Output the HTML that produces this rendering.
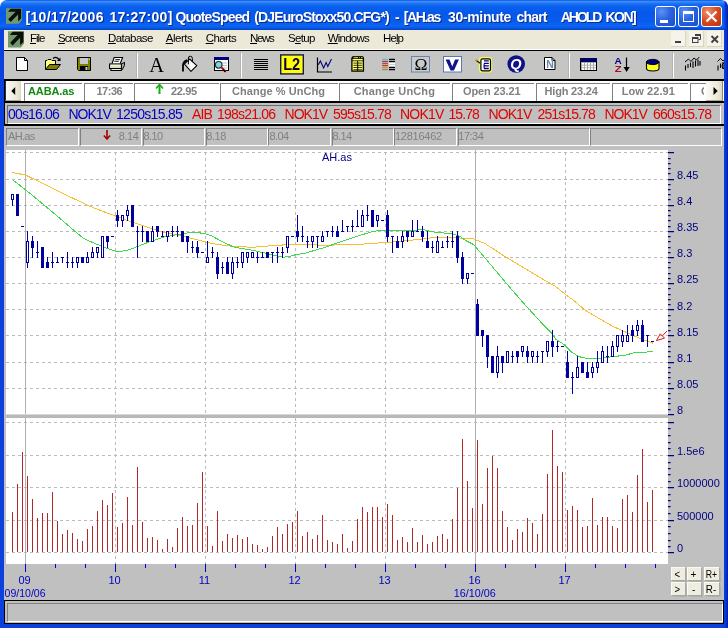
<!DOCTYPE html>
<html><head><meta charset="utf-8"><title>QuoteSpeed</title>
<style>
*{margin:0;padding:0;box-sizing:border-box}
html,body{width:728px;height:628px;overflow:hidden;background:#0c3fdc;font-family:"Liberation Sans",sans-serif}
.a{position:absolute}
.x{position:absolute;white-space:pre}
#win{will-change:transform;position:absolute;left:0;top:0;width:728px;height:628px;background:#0c41de;overflow:hidden}
#title{position:absolute;left:0;top:0;width:728px;height:30px;background:linear-gradient(#0a52e0 0,#3a8cfc 1.5px,#1f74f4 3.5px,#0a62ee 6px,#0658ea 13px,#075cee 22px,#0c66f6 26px,#0858e0 28px,#0440c4 30px);border-radius:7px 7px 0 0}
#title .x{text-shadow:1px 1px 0 #0a2a8a}
#menu{position:absolute;left:4px;top:30px;width:720px;height:20px;background:#ece9d8;border-bottom:1px solid #fff}
#tb{position:absolute;left:4px;top:50px;width:720px;height:29px;background:#c5c5c4;border-top:1px solid #000}
#r1{position:absolute;left:4px;top:79px;width:720px;height:24px;background:#fff;border-top:2px solid #000;border-bottom:2px solid #000}
.c1{position:absolute;top:83px;height:18px;border-top:1px solid #808080;border-left:1px solid #808080;background:#fff}
#r2{position:absolute;left:4px;top:103px;width:720px;height:21px;background:#c0c0c0}
#r3{position:absolute;left:4px;top:126px;width:720px;height:23px;background:#c0c0c0}
.c3{position:absolute;top:128px;height:18px;border-top:1px solid #808080;border-left:1px solid #808080;border-right:1px solid #fff;border-bottom:1px solid #fff}
#chart{position:absolute;left:4px;top:149px;width:720px;height:451px;background:#c0c0c0}
#status{position:absolute;left:4px;top:600px;width:720px;height:24px;background:#c0c0c0;border:1px solid #000}
.wb{position:absolute;top:6px;width:21px;height:21px;border:1px solid #fff;border-radius:3px;background:radial-gradient(circle at 30% 25%,#5a92f8 0,#2a62e0 45%,#1c4cc8 100%)}
.wc{background:radial-gradient(circle at 30% 25%,#f09070 0,#d84820 50%,#b83010 100%)}
.mb{position:absolute;top:31px;width:15px;height:16px;background:#f6f4ea;border-right:1px solid #d8d4c4;border-bottom:1px solid #d8d4c4}
.sb{position:absolute;width:14px;height:13px;background:#efede0;border-top:1px solid #fbfaf4;border-left:1px solid #fbfaf4;box-shadow:1px 1px 0 #a8a8a0,1.5px 1.5px 1px #b0b0b0}
</style></head><body>
<div id="win">
<div class="a" style="left:0;top:0;width:728px;height:8px;background:#fff"></div>
<div id="title"><span class="x " style="left:25.40px;top:8.15px;font-size:14px;line-height:18px;font-weight:bold;color:#fff;letter-spacing:0.336px;">[10/17/2006 </span><span class="x " style="left:109.40px;top:8.15px;font-size:14px;line-height:18px;font-weight:bold;color:#fff;letter-spacing:0.282px;">17:27:00] </span><span class="x " style="left:175.40px;top:8.15px;font-size:14px;line-height:18px;font-weight:bold;color:#fff;letter-spacing:-0.856px;">QuoteSpeed </span><span class="x " style="left:254.20px;top:8.15px;font-size:14px;line-height:18px;font-weight:bold;color:#fff;letter-spacing:-0.854px;">(DJEuroStoxx50.CFG*) </span><span class="x " style="left:394.90px;top:8.15px;font-size:14px;line-height:18px;font-weight:bold;color:#fff;letter-spacing:0.000px;">- </span><span class="x " style="left:403.70px;top:8.15px;font-size:14px;line-height:18px;font-weight:bold;color:#fff;letter-spacing:-1.352px;">[AH.as </span><span class="x " style="left:448.10px;top:8.15px;font-size:14px;line-height:18px;font-weight:bold;color:#fff;letter-spacing:-0.355px;">30-minute </span><span class="x " style="left:516.40px;top:8.15px;font-size:14px;line-height:18px;font-weight:bold;color:#fff;letter-spacing:-0.793px;">chart </span><span class="x " style="left:560.80px;top:8.15px;font-size:14px;line-height:18px;font-weight:bold;color:#fff;letter-spacing:-2.066px;">AHOLD </span><span class="x " style="left:605.40px;top:8.15px;font-size:14px;line-height:18px;font-weight:bold;color:#fff;letter-spacing:-1.503px;">KON] </span>
<div class="wb" style="left:655px"><div class="a" style="left:4px;top:13px;width:8px;height:3px;background:#fff"></div></div>
<div class="wb" style="left:678px"><div class="a" style="left:4px;top:4px;width:11px;height:11px;border:1px solid #fff;border-top-width:3px"></div></div>
<div class="wb wc" style="left:701px"><svg class="a" style="left:0;top:0" width="19" height="19"><path d="M4.5,4.5L14.5,14.5M14.5,4.5L4.5,14.5" stroke="#fff" stroke-width="2.3"/></svg></div>
<svg class="a" style="left:6px;top:8.2px" width="17" height="17" viewBox="0 0 17 17"><path d="M0,0.2H16V12L13,15.8H0Z" fill="#73986f"/><path d="M2.2,3.5L4.7,0.8H15.2V10.5L12.1,13.6V6.6L4.6,14L2.2,11.2L9.6,3.7H2.2Z" fill="#0a0f0a"/></svg>
</div>
<div class="a" style="left:722px;top:0;width:6px;height:628px;border-radius:0 7px 0 0/0 9px 0 0;background:linear-gradient(90deg,rgba(10,58,216,0) 0,rgba(10,58,216,0) 33%,#0a3ad8 50%,#0830c8 75%,#041c98)"></div>
<div id="menu"></div>
<svg class="a" style="left:8px;top:31.3px" width="17" height="18" viewBox="0 0 17 18"><path d="M0,0.2H16V12.5L13,16.6H0Z" fill="#73986f"/><path d="M2.2,3.6L4.7,0.8H15.4V11L12.1,14.2V6.8L4.6,14.6L2.2,11.8L9.6,3.9H2.2Z" fill="#0a0f0a"/></svg>
<div class="mb" style="left:671px"><div class="a" style="left:4px;top:10px;width:6px;height:2px;background:#404040"></div></div>
<div class="mb" style="left:689px"><svg class="a" style="left:0;top:0" width="15" height="16"><path d="M6,3.5H11.5V8.5H9.5" fill="none" stroke="#404040" stroke-width="1"/><path d="M6,4H11.5" stroke="#404040" stroke-width="2"/><rect x="3.5" y="6.5" width="5.5" height="5" fill="none" stroke="#404040"/><path d="M3.5,7H9" stroke="#404040" stroke-width="2"/></svg></div>
<div class="mb" style="left:707px"><svg class="a" style="left:0;top:0" width="15" height="16"><path d="M4.5,5L11,11.5M11,5L4.5,11.5" stroke="#404040" stroke-width="1.9"/></svg></div>
<span class="x " style="left:30.00px;top:31.27px;font-size:11.5px;line-height:15.5px;font-weight:normal;color:#000;letter-spacing:-1.045px;"><u>F</u>ile </span><span class="x " style="left:58.00px;top:31.27px;font-size:11.5px;line-height:15.5px;font-weight:normal;color:#000;letter-spacing:-0.906px;"><u>S</u>creens </span><span class="x " style="left:108.00px;top:31.27px;font-size:11.5px;line-height:15.5px;font-weight:normal;color:#000;letter-spacing:-0.548px;"><u>D</u>atabase </span><span class="x " style="left:165.70px;top:31.27px;font-size:11.5px;line-height:15.5px;font-weight:normal;color:#000;letter-spacing:-0.469px;"><u>A</u>lerts </span><span class="x " style="left:205.70px;top:31.27px;font-size:11.5px;line-height:15.5px;font-weight:normal;color:#000;letter-spacing:-0.564px;"><u>C</u>harts </span><span class="x " style="left:250.00px;top:31.27px;font-size:11.5px;line-height:15.5px;font-weight:normal;color:#000;letter-spacing:-1.335px;"><u>N</u>ews </span><span class="x " style="left:288.00px;top:31.27px;font-size:11.5px;line-height:15.5px;font-weight:normal;color:#000;letter-spacing:-0.664px;">S<u>e</u>tup </span><span class="x " style="left:327.70px;top:31.27px;font-size:11.5px;line-height:15.5px;font-weight:normal;color:#000;letter-spacing:-0.767px;"><u>W</u>indows </span><span class="x " style="left:383.00px;top:31.27px;font-size:11.5px;line-height:15.5px;font-weight:normal;color:#000;letter-spacing:-0.919px;">He<u>l</u>p </span>
<div id="tb"></div><svg class="a" style="left:0;top:51px" width="724" height="28" viewBox="0 51 724 28" font-family="'Liberation Sans',sans-serif">
<path d="M136.5,52V78" stroke="#b4b4b4" stroke-width="1"/><path d="M137.5,53V78" stroke="#fff" stroke-width="1"/>
<path d="M240.5,52V78" stroke="#b4b4b4" stroke-width="1"/><path d="M241.5,53V78" stroke="#fff" stroke-width="1"/>
<path d="M568.5,52V78" stroke="#b4b4b4" stroke-width="1"/><path d="M569.5,53V78" stroke="#fff" stroke-width="1"/>
<path d="M672.5,52V78" stroke="#b4b4b4" stroke-width="1"/><path d="M673.5,53V78" stroke="#fff" stroke-width="1"/>
<path d="M16.5,57.5H24.5L27.5,60.5V70.5H16.5Z" fill="#fff" stroke="#000"/><path d="M24.5,57.5V60.5H27.5" fill="none" stroke="#000"/>
<path d="M45.5,69.5V60.5H47L48,59.5H51L52,60.5H55.5V64.5" fill="#ffff80" stroke="#000"/><path d="M46,69V61H55V65H49Z" fill="#ffff80"/>
<path d="M45.5,69.5L49.5,64.5H60.5L56.5,69.5Z" fill="#808000" stroke="#000" stroke-linejoin="round"/>
<path d="M53,58.5Q56,56 59,59.5" fill="none" stroke="#000" stroke-width="1.2"/><path d="M57,61H60.5V57.5Z" fill="#000"/>
<path d="M77.5,57.5H90.5V70.5H78.5L77.5,69.5Z" fill="#808000" stroke="#000"/><rect x="80" y="58" width="8" height="6" fill="#c8c8c8"/><rect x="80" y="66" width="8" height="4.5" fill="#000"/><rect x="85.5" y="67" width="2" height="3" fill="#c8c8c8"/><rect x="88.7" y="58.5" width="1.2" height="1.2" fill="#fff"/>
<path d="M121.3,64L124.5,62.3V65.3L122,70L121,70.5Z" fill="#a8a8a8" stroke="#000" stroke-width="1" stroke-linejoin="round"/>
<path d="M112,63.5L114.2,57.5H122.6L120.2,63.5" fill="#fff" stroke="#000" stroke-width="1.1"/><path d="M115.3,59.6H120M114.3,61.3H118.8" stroke="#202020" stroke-width="1"/>
<rect x="109.6" y="64" width="11.8" height="4.5" fill="#e0e0e0" stroke="#000" stroke-width="1.1"/><path d="M110.4,66.8H120.6" stroke="#e8e8a0" stroke-width="1.8"/><path d="M110.4,65.2H120.6" stroke="#f4f4f4" stroke-width="1"/>
<path d="M111,68.6V70.5H121.2" fill="none" stroke="#000" stroke-width="1.2"/><path d="M111.8,69.5H120.6" stroke="#e8e8e8" stroke-width="1"/>
<text x="149.3" y="71.6" font-family="'Liberation Serif',serif" font-size="20.5" fill="#000">A</text>
<defs><linearGradient id="bk" x1="0" y1="0" x2="1" y2="0"><stop offset="0" stop-color="#c8c8c8"/><stop offset="0.55" stop-color="#fff"/><stop offset="1" stop-color="#fff"/></linearGradient></defs>
<path d="M184.3,64L189.6,59L196.8,65.6L191,71.4Z" fill="url(#bk)" stroke="#000" stroke-width="1.1" stroke-linejoin="round"/><path d="M188.4,64.3V58Q188.4,56.2 190.3,56.2Q192.4,56.3 192.4,58.5V61" fill="none" stroke="#000" stroke-width="1"/><path d="M187,60.2Q183,61.8 183,65.5V71.6" fill="none" stroke="#000" stroke-width="1.8"/>
<rect x="214.5" y="57.5" width="14" height="13" fill="#fff" stroke="#000"/><rect x="214" y="57" width="15" height="3" fill="#000080"/><path d="M222,63H227M222,65.5H227M223,68H227" stroke="#b0b0c8" stroke-width="0.9"/><circle cx="218.7" cy="64.8" r="3.3" fill="#80d8d8" stroke="#203040" stroke-width="1.2"/><path d="M221.5,67.5L225.5,71.5" stroke="#c00000" stroke-width="1.8"/><path d="M223,69.8L225.6,72" stroke="#000" stroke-width="1.2"/>
<path d="M254,59.5H268M254,61.5H268M254,63.5H268M254,65.5H268M254,67.5H268M254,69.5H268" stroke="#000" stroke-width="1" shape-rendering="crispEdges"/>
<rect x="280.7" y="54.9" width="22.6" height="19" fill="#ffff00" stroke="#181850" stroke-width="1.4"/><text x="283.2" y="69.8" font-size="16" font-weight="bold" fill="#100048" textLength="17" lengthAdjust="spacingAndGlyphs">L2</text>
<path d="M317.5,57.5V72H332" fill="none" stroke="#000" stroke-width="1.2"/><path d="M318.3,64.8L320.4,61L323.6,68L326.1,62.6L327.8,66.4L331.5,59" fill="none" stroke="#000080" stroke-width="1.1"/>
<path d="M351.9,58L353.2,57H362.3L363.4,58V71.2H351.9Z" fill="#ffff60" stroke="#000" stroke-width="1.3" stroke-linejoin="round"/><rect x="352" y="56.6" width="11.4" height="2.3" fill="#000"/><path d="M353.6,57.7H358M359.2,57.7H360M361,57.7H362.6" stroke="#ffff60" stroke-width="0.9"/>
<path d="M352,60.75H363.4M353.4,63.1H362.2M353.4,65.3H362.2M353.4,67.5H362.2M353.4,69.7H362.2" stroke="#000" stroke-width="0.75"/><path d="M357.7,60.75V71" stroke="#000" stroke-width="1"/>
<path d="M382.2,59.40H387.9" stroke="#70b0e0" stroke-width="1.25"/><path d="M389,59.40H395" stroke="#000" stroke-width="1.25"/>
<path d="M382.2,61.44H387.9" stroke="#585868" stroke-width="1.25"/><path d="M389,61.44H395" stroke="#000" stroke-width="1.25"/>
<path d="M382.2,63.48H387.9" stroke="#e03030" stroke-width="1.25"/><path d="M389,63.48H395" stroke="#fff" stroke-width="1.25"/>
<path d="M382.2,65.52H387.9" stroke="#b04010" stroke-width="1.25"/><path d="M389,65.52H395" stroke="#fff" stroke-width="1.25"/>
<path d="M382.2,67.56H387.9" stroke="#e08030" stroke-width="1.25"/><path d="M389,67.56H395" stroke="#000" stroke-width="1.25"/>
<path d="M382.2,69.60H387.9" stroke="#909050" stroke-width="1.25"/><path d="M389,69.60H395" stroke="#000" stroke-width="1.25"/>
<rect x="411.5" y="56.5" width="18" height="15.5" fill="#cacaca" stroke="#6484b8" stroke-width="1"/><text x="414.6" y="69.7" font-family="'Liberation Serif',serif" font-size="16.5" fill="#000" textLength="13" lengthAdjust="spacingAndGlyphs">Ω</text>
<rect x="443.5" y="56.5" width="18" height="15.5" fill="#fff" stroke="#5878b8" stroke-width="1"/><text x="446.3" y="69.9" font-size="15.2" font-weight="bold" fill="#10108a" stroke="#10108a" stroke-width="0.9" textLength="12" lengthAdjust="spacingAndGlyphs">V</text>
<rect x="480" y="58" width="11.2" height="13.7" rx="2.2" fill="none" stroke="#ffff40" stroke-width="1.8"/><rect x="480.9" y="58.9" width="9.6" height="12" rx="1.6" fill="#fff" stroke="#000" stroke-width="1.2"/><path d="M484,60.8H488.8M484,63.4H488.8M484,65.9H488.8M484,68.5H488.8" stroke="#000070" stroke-width="1.3"/><path d="M484.1,63.4V68.5" stroke="#000070" stroke-width="1.1"/><path d="M475.9,60.2L480.2,63.2" stroke="#201000" stroke-width="1.3"/><path d="M475.7,59.9L477.3,61" stroke="#e08000" stroke-width="1.3"/>
<circle cx="516.2" cy="64" r="8.8" fill="#10108a"/><text x="510.3" y="69.3" font-size="14.5" font-weight="bold" font-style="italic" fill="#fff">Q</text>
<path d="M544.5,57.5H552L555,60.5V69.5H544.5Z" fill="#fff" stroke="#000"/><path d="M552,57.5V60.5H555" fill="none" stroke="#000"/><text x="546.3" y="67.8" font-size="10.5" font-weight="bold" fill="#6888b0">N</text>
<rect x="580.5" y="58.5" width="16" height="12" fill="#a8a8a8" stroke="#000"/><rect x="580" y="58" width="17" height="4" fill="#000060"/>
<rect x="582" y="63.0" width="2" height="1.7" fill="#fff"/>
<rect x="585" y="63.0" width="2" height="1.7" fill="#fff"/>
<rect x="588" y="63.0" width="2" height="1.7" fill="#fff"/>
<rect x="591" y="63.0" width="2" height="1.7" fill="#fff"/>
<rect x="594" y="63.0" width="2" height="1.7" fill="#fff"/>
<rect x="582" y="65.6" width="2" height="1.7" fill="#fff"/>
<rect x="585" y="65.6" width="2" height="1.7" fill="#fff"/>
<rect x="588" y="65.6" width="2" height="1.7" fill="#fff"/>
<rect x="591" y="65.6" width="2" height="1.7" fill="#fff"/>
<rect x="594" y="65.6" width="2" height="1.7" fill="#fff"/>
<rect x="582" y="68.2" width="2" height="1.7" fill="#fff"/>
<rect x="585" y="68.2" width="2" height="1.7" fill="#fff"/>
<rect x="588" y="68.2" width="2" height="1.7" fill="#fff"/>
<rect x="591" y="68.2" width="2" height="1.7" fill="#fff"/>
<rect x="594" y="68.2" width="2" height="1.7" fill="#fff"/>
<text x="614.6" y="63.6" font-size="8.6" font-weight="bold" fill="#000080" textLength="7.2" lengthAdjust="spacingAndGlyphs">A</text><text x="614.8" y="71.7" font-size="8.6" font-weight="bold" fill="#a01028" textLength="6.8" lengthAdjust="spacingAndGlyphs">Z</text>
<path d="M626.5,57.5V70" stroke="#000" stroke-width="1.2"/><path d="M623.5,67H629.7L626.6,72Z" fill="#000"/>
<path d="M646.5,62V68.5Q646.5,71 652.7,71Q659,71 659,68.5V62Z" fill="#ffff20" stroke="#000" stroke-width="1.1"/><ellipse cx="652.7" cy="62" rx="6.2" ry="2.6" fill="#000080" stroke="#000" stroke-width="1"/>
<path d="M685,62L688.5,59L691,61.5L694,58L696.3,60L699.3,57" fill="none" stroke="#000" stroke-width="1"/><path d="M685.5,65.5V70.5M688,64V68M690.5,62.5V67M693,61.5V68M695.5,60.5V66.5M698,59.5V66M700,61V65.5" stroke="#000" stroke-width="1.1"/>
<path d="M717.5,61.5L720.5,58.5L723,61L726,58" fill="none" stroke="#000" stroke-width="1"/><path d="M718,65.5V70.5M720.5,63.5V68M723,62V69" stroke="#000" stroke-width="1.1"/><circle cx="725" cy="66" r="3" fill="none" stroke="#000" stroke-width="1"/>
</svg>
<div id="r1"></div>
<div class="c1" style="left:24px;width:58px"></div><div class="c1" style="left:84px;width:49px"></div><div class="c1" style="left:134px;width:85px"></div><div class="c1" style="left:220px;width:118px"></div><div class="c1" style="left:339px;width:111px"></div><div class="c1" style="left:452px;width:82px"></div><div class="c1" style="left:536px;width:74px"></div><div class="c1" style="left:612px;width:76px"></div><div class="c1" style="left:690px;width:16px"></div><span class="x " style="left:28.00px;top:84.19px;font-size:11px;line-height:15px;font-weight:bold;color:#108a10;letter-spacing:-0.117px;">AABA.as </span><span class="x " style="left:96.50px;top:84.19px;font-size:11px;line-height:15px;font-weight:bold;color:#808080;letter-spacing:-0.504px;">17:36 </span><span class="x " style="left:171.00px;top:84.19px;font-size:11px;line-height:15px;font-weight:bold;color:#808080;letter-spacing:-0.352px;">22.95 </span><span class="x " style="left:232.00px;top:84.19px;font-size:11px;line-height:15px;font-weight:bold;color:#808080;letter-spacing:0.053px;">Change % UnChg </span><span class="x " style="left:353.75px;top:84.19px;font-size:11px;line-height:15px;font-weight:bold;color:#808080;letter-spacing:0.162px;">Change UnChg </span><span class="x " style="left:463.00px;top:84.19px;font-size:11px;line-height:15px;font-weight:bold;color:#808080;letter-spacing:-0.120px;">Open 23.21 </span><span class="x " style="left:544.50px;top:84.19px;font-size:11px;line-height:15px;font-weight:bold;color:#808080;letter-spacing:-0.184px;">High 23.24 </span><span class="x " style="left:621.75px;top:84.19px;font-size:11px;line-height:15px;font-weight:bold;color:#808080;letter-spacing:0.068px;">Low 22.91 </span><div class="a" style="left:689px;top:83px;width:15px;height:18px;overflow:hidden"><span class="x " style="left:12.00px;top:1.19px;font-size:11px;line-height:15px;font-weight:bold;color:#808080;letter-spacing:0.000px;">Change </span></div><div class="a" style="left:5px;top:81px;width:16px;height:20px;background:linear-gradient(90deg,#fbfaf6,#ece9d8 70%,#ddd8c4);border-left:1px solid #303030;border-bottom:1px solid #b0a890"><svg class="a" style="left:4.6px;top:6px" width="6" height="9"><path d="M4.2,0 L4.2,8 L0.3,4Z" fill="#000"/></svg></div><div class="a" style="left:706px;top:81px;width:17px;height:20px;background:linear-gradient(90deg,#fbfaf6,#ece9d8 70%,#ddd8c4);border-right:1px solid #908870;border-bottom:1px solid #b0a890"><svg class="a" style="left:6.8px;top:6px" width="6" height="9"><path d="M0.5,0 L0.5,8 L4.7,4Z" fill="#000"/></svg></div><svg class="a" style="left:155px;top:84px" width="9" height="11"><path d="M4.5,1 L4.5,10" stroke="#10b010" stroke-width="2" fill="none"/><path d="M1,4.5 L4.5,0.5 L8,4.5" stroke="#10b010" stroke-width="1.6" fill="none"/></svg>
<div class="a" style="left:4px;top:124px;width:720px;height:2px;background:#000"></div>
<div id="r2"></div>
<div class="a" style="left:7px;top:105px;width:714px;height:19px;border-top:1px solid #686868;border-left:1px solid #686868;border-right:1px solid #fff;border-bottom:1px solid #fff"></div><div class="a" style="left:4px;top:79px;width:1px;height:47px;background:#000"></div><span class="x " style="left:8.00px;top:104.95px;font-size:14px;line-height:18px;font-weight:normal;color:#0000c8;letter-spacing:-0.831px;">00s16.06 </span><span class="x " style="left:68.50px;top:104.95px;font-size:14px;line-height:18px;font-weight:normal;color:#0000c8;letter-spacing:-1.031px;">NOK1V </span><span class="x " style="left:116.00px;top:104.95px;font-size:14px;line-height:18px;font-weight:normal;color:#0000c8;letter-spacing:-0.710px;">1250s15.85 </span><span class="x " style="left:192.00px;top:104.95px;font-size:14px;line-height:18px;font-weight:normal;color:#e00000;letter-spacing:-0.864px;">AIB </span><span class="x " style="left:217.00px;top:104.95px;font-size:14px;line-height:18px;font-weight:normal;color:#e00000;letter-spacing:-0.795px;">198s21.06 </span><span class="x " style="left:284.50px;top:104.95px;font-size:14px;line-height:18px;font-weight:normal;color:#e00000;letter-spacing:-0.969px;">NOK1V </span><span class="x " style="left:333.00px;top:104.95px;font-size:14px;line-height:18px;font-weight:normal;color:#e00000;letter-spacing:-0.826px;">595s15.78 </span><span class="x " style="left:400.00px;top:104.95px;font-size:14px;line-height:18px;font-weight:normal;color:#e00000;letter-spacing:-0.781px;">NOK1V </span><span class="x " style="left:448.50px;top:104.95px;font-size:14px;line-height:18px;font-weight:normal;color:#e00000;letter-spacing:-0.937px;">15.78 </span><span class="x " style="left:488.50px;top:104.95px;font-size:14px;line-height:18px;font-weight:normal;color:#e00000;letter-spacing:-0.906px;">NOK1V </span><span class="x " style="left:537.50px;top:104.95px;font-size:14px;line-height:18px;font-weight:normal;color:#e00000;letter-spacing:-0.888px;">251s15.78 </span><span class="x " style="left:604.50px;top:104.95px;font-size:14px;line-height:18px;font-weight:normal;color:#e00000;letter-spacing:-1.031px;">NOK1V </span><span class="x " style="left:653.00px;top:104.95px;font-size:14px;line-height:18px;font-weight:normal;color:#e00000;letter-spacing:-0.795px;">660s15.78 </span>
<div id="r3"></div>
<div class="c3" style="left:6px;width:73px"></div><div class="c3" style="left:80px;width:62px"></div><div class="c3" style="left:143px;width:62px"></div><div class="c3" style="left:206px;width:62px"></div><div class="c3" style="left:268px;width:63px"></div><div class="c3" style="left:332px;width:62px"></div><div class="c3" style="left:394px;width:63px"></div><div class="c3" style="left:458px;width:132px"></div><div class="c3" style="left:590px;width:132px"></div><span class="x " style="left:8.00px;top:129.09px;font-size:11px;line-height:15px;font-weight:normal;color:#808080;letter-spacing:-0.676px;">AH.as </span><span class="x " style="left:118.75px;top:129.09px;font-size:11px;line-height:15px;font-weight:normal;color:#808080;letter-spacing:-0.431px;">8.14 </span><span class="x " style="left:143.50px;top:129.09px;font-size:11px;line-height:15px;font-weight:normal;color:#808080;letter-spacing:-0.597px;">8.10 </span><span class="x " style="left:206.25px;top:129.09px;font-size:11px;line-height:15px;font-weight:normal;color:#808080;letter-spacing:-0.431px;">8.18 </span><span class="x " style="left:269.50px;top:129.09px;font-size:11px;line-height:15px;font-weight:normal;color:#808080;letter-spacing:-0.597px;">8.04 </span><span class="x " style="left:332.50px;top:129.09px;font-size:11px;line-height:15px;font-weight:normal;color:#808080;letter-spacing:-0.597px;">8.14 </span><span class="x " style="left:395.00px;top:129.09px;font-size:11px;line-height:15px;font-weight:normal;color:#808080;letter-spacing:-0.261px;">12816462 </span><span class="x " style="left:458.25px;top:129.09px;font-size:11px;line-height:15px;font-weight:normal;color:#808080;letter-spacing:-0.477px;">17:34 </span><svg class="a" style="left:103px;top:130px" width="8" height="10"><path d="M4,0 L4,9" stroke="#a00000" stroke-width="1.6" fill="none"/><path d="M0.8,5.5 L4,9 L7.2,5.5" stroke="#a00000" stroke-width="1.5" fill="none"/></svg>
<div id="chart"><svg class="a" style="left:-4px;top:-149px" width="728" height="628" viewBox="0 0 728 628" font-family="'Liberation Sans',sans-serif">
<rect x="6" y="150" width="662" height="414" fill="#fff"/>
<path d="M6,152.5H668M6,179.5H668M6,205.5H668M6,231.5H668M6,257.5H668M6,283.5H668M6,309.5H668M6,335.5H668M6,362.5H668M6,388.5H668M6,422.5H668M6,455.5H668M6,487.5H668M6,520.5H668M6,552.5H668M115.5,152V415M115.5,418V564M205.5,152V415M205.5,418V564M295.5,152V415M295.5,418V564M385.5,152V415M385.5,418V564M565.5,152V415M565.5,418V564" stroke="#bababa" stroke-width="1" stroke-dasharray="3 3" fill="none" shape-rendering="crispEdges"/>
<path d="M25.5,150V564M475.5,150V564" stroke="#b0b0b0" stroke-width="1" fill="none" shape-rendering="crispEdges"/>
<rect x="6" y="414" width="662" height="1" fill="#d8d8d8"/><rect x="6" y="415" width="662" height="3" fill="#b8b8b8"/>
<text x="322" y="161" font-size="11" fill="#000080">AH.as</text>
<polyline points="11.7,172.3 25.1,174.9 44.0,184.0 63.3,193.6 88.1,205.5 106.0,212.6 116.0,216.2 132.7,222.4 163.3,232.3 182.4,236.1 201.5,240.9 215.1,244.1 234.2,246.6 253.3,247.2 272.4,245.7 291.5,244.4 306.0,244.5 324.2,245.3 362.4,244.1 395.1,241.8 414.2,239.9 433.3,237.6 452.4,237.1 466.0,238.7 473.6,238.9 485.1,243.6 504.2,256.1 523.3,267.5 542.4,279.0 555.8,286.6 565.3,294.3 575.1,301.5 584.6,309.8 594.2,315.6 613.3,326.6 632.4,335.0 642.0,339.4 653.4,343.3" fill="none" stroke="#f6be30" stroke-width="1" shape-rendering="crispEdges"/>
<polyline points="12.7,179.9 25.1,189.4 44.2,205.1 63.3,221.3 82.4,237.6 90.0,241.4 101.5,246.2 110.0,249.5 117.5,251.8 125.0,250.8 132.7,248.5 144.2,243.8 163.3,237.1 182.4,233.8 192.0,232.3 198.0,232.6 205.3,233.8 211.3,235.7 224.6,242.8 234.2,247.2 253.3,250.4 272.4,254.8 283.9,257.1 290.0,256.3 295.3,254.8 305.1,253.2 324.2,247.6 343.3,240.9 362.4,234.6 373.9,231.3 381.5,230.4 396.0,230.4 414.2,230.4 421.8,229.3 433.3,231.9 452.4,233.8 460.0,236.5 466.0,240.8 473.6,244.6 485.1,258.0 504.2,280.9 523.3,302.9 542.4,323.9 552.0,333.4 556.0,339.4 563.6,344.2 571.3,351.8 578.9,356.6 586.6,358.5 598.0,358.5 613.3,356.6 624.8,355.3 636.2,352.2 645.8,352.2 653.4,350.9" fill="none" stroke="#40d84c" stroke-width="1" shape-rendering="crispEdges"/>
<g shape-rendering="crispEdges"><path d="M12.5,199V206M17.5,194V216M27.5,231V241M27.5,262V268M32.5,236V258M37.5,241V258M42.5,247V268M47.5,257V268M52.5,252V268M57.5,257V263M62.5,257V263M67.5,252V268M72.5,257V268M77.5,262V268M82.5,257V263M87.5,252V257M92.5,247V252M97.5,252V258M107.5,236V248M117.5,210V227M122.5,220V227M127.5,205V210M127.5,215V221M132.5,205V227M137.5,226V258M142.5,226V242M147.5,231V242M152.5,226V231M157.5,226V237M162.5,231V237M167.5,236V242M172.5,226V237M177.5,226V237M182.5,231V242M187.5,236V253M192.5,241V253M197.5,241V258M207.5,241V257M212.5,247V258M217.5,252V279M222.5,262V274M227.5,257V274M232.5,257V262M232.5,273V279M237.5,257V268M242.5,262V268M247.5,257V263M257.5,252V263M262.5,252V258M267.5,252V258M272.5,252V263M277.5,247V263M282.5,247V258M287.5,247V253M297.5,215V242M302.5,226V242M307.5,236V248M312.5,241V248M317.5,236V248M322.5,231V236M327.5,231V237M332.5,226V237M337.5,226V237M342.5,220V232M347.5,226V232M352.5,220V232M357.5,210V227M362.5,210V215M367.5,205V221M372.5,210V227M377.5,220V227M387.5,210V242M392.5,236V253M397.5,236V248M402.5,231V236M402.5,241V248M407.5,231V242M412.5,220V231M417.5,220V232M422.5,226V242M427.5,231V248M432.5,241V253M437.5,236V241M442.5,241V248M447.5,236V248M452.5,231V248M457.5,231V263M462.5,252V284M467.5,278V284M477.5,299V336M482.5,330V347M487.5,335V368M492.5,356V373M497.5,346V356M497.5,372V378M502.5,356V373M512.5,351V363M517.5,351V363M522.5,351V357M527.5,346V363M532.5,356V363M537.5,351V363M542.5,351V363M547.5,351V357M552.5,330V357M557.5,341V352M567.5,351V378M572.5,372V394M577.5,356V367M582.5,362V373M587.5,362V378M592.5,362V367M592.5,372V378M597.5,351V362M597.5,367V373M602.5,346V351M607.5,346V363M612.5,341V346M617.5,346V352M622.5,330V335M622.5,341V347M627.5,325V335M632.5,325V342M637.5,320V325M637.5,330V336M642.5,320V342M647.5,335V347" stroke="#0000a0" stroke-width="1" fill="none"/>
<path d="M16.0,194h3V216h-3ZM31.0,241h3V248h-3ZM41.0,247h3V268h-3ZM46.0,262h3V268h-3ZM81.0,257h3V263h-3ZM106.0,236h3V242h-3ZM116.0,215h3V221h-3ZM131.0,205h3V227h-3ZM146.0,231h3V242h-3ZM156.0,226h3V232h-3ZM181.0,231h3V242h-3ZM186.0,236h3V242h-3ZM196.0,247h3V253h-3ZM216.0,257h3V274h-3ZM226.0,262h3V274h-3ZM266.0,252h3V258h-3ZM296.0,231h3V237h-3ZM336.0,231h3V237h-3ZM371.0,210h3V227h-3ZM386.0,215h3V237h-3ZM396.0,241h3V248h-3ZM406.0,231h3V237h-3ZM421.0,231h3V237h-3ZM426.0,241h3V248h-3ZM456.0,236h3V258h-3ZM461.0,257h3V279h-3ZM476.0,304h3V336h-3ZM481.0,330h3V336h-3ZM486.0,335h3V357h-3ZM491.0,356h3V373h-3ZM501.0,356h3V363h-3ZM516.0,351h3V357h-3ZM526.0,351h3V357h-3ZM551.0,341h3V347h-3ZM566.0,362h3V378h-3ZM581.0,362h3V373h-3ZM586.0,372h3V378h-3ZM631.0,330h3V336h-3ZM641.0,325h3V342h-3Z" fill="#0000a0"/>
<path d="M11.5,194.5h2V199.5h-2ZM26.5,241.5h2V262.5h-2ZM76.5,257.5h2V262.5h-2ZM86.5,257.5h2V262.5h-2ZM91.5,252.5h2V257.5h-2ZM96.5,247.5h2V252.5h-2ZM101.5,236.5h2V257.5h-2ZM121.5,215.5h2V220.5h-2ZM126.5,210.5h2V215.5h-2ZM151.5,231.5h2V241.5h-2ZM166.5,231.5h2V236.5h-2ZM206.5,257.5h2V262.5h-2ZM231.5,262.5h2V273.5h-2ZM241.5,252.5h2V262.5h-2ZM246.5,252.5h2V257.5h-2ZM251.5,252.5h2V257.5h-2ZM286.5,236.5h2V247.5h-2ZM311.5,236.5h2V241.5h-2ZM321.5,236.5h2V241.5h-2ZM361.5,215.5h2V226.5h-2ZM376.5,215.5h2V220.5h-2ZM401.5,236.5h2V241.5h-2ZM411.5,231.5h2V236.5h-2ZM436.5,241.5h2V252.5h-2ZM466.5,273.5h2V278.5h-2ZM496.5,356.5h2V372.5h-2ZM506.5,351.5h2V362.5h-2ZM521.5,346.5h2V351.5h-2ZM531.5,351.5h2V356.5h-2ZM546.5,341.5h2V351.5h-2ZM576.5,367.5h2V377.5h-2ZM591.5,367.5h2V372.5h-2ZM596.5,362.5h2V367.5h-2ZM601.5,351.5h2V362.5h-2ZM611.5,346.5h2V356.5h-2ZM616.5,335.5h2V346.5h-2ZM621.5,335.5h2V341.5h-2ZM626.5,335.5h2V341.5h-2ZM636.5,325.5h2V330.5h-2Z" fill="#fff" stroke="#0000a0" stroke-width="1"/>
<path d="M21.0,226.5h3M36.0,252.5h3M51.0,262.5h3M56.0,262.5h3M61.0,257.5h3M66.0,262.5h3M71.0,262.5h3M111.0,236.5h3M136.0,231.5h3M141.0,231.5h3M161.0,236.5h3M171.0,231.5h3M176.0,231.5h3M191.0,247.5h3M201.0,252.5h3M211.0,252.5h3M221.0,267.5h3M236.0,262.5h3M256.0,257.5h3M261.0,257.5h3M271.0,252.5h3M276.0,252.5h3M281.0,252.5h3M291.0,236.5h3M301.0,236.5h3M306.0,241.5h3M316.0,236.5h3M326.0,231.5h3M331.0,231.5h3M341.0,231.5h3M346.0,226.5h3M351.0,226.5h3M356.0,226.5h3M366.0,215.5h3M381.0,220.5h3M391.0,236.5h3M416.0,231.5h3M431.0,247.5h3M441.0,247.5h3M446.0,241.5h3M451.0,241.5h3M471.0,273.5h3M511.0,356.5h3M536.0,356.5h3M541.0,351.5h3M556.0,346.5h3M561.0,346.5h3M571.0,377.5h3M606.0,356.5h3M646.0,335.5h3M651.0,341.5h3" stroke="#0000a0" stroke-width="1" fill="none"/></g>
<path d="M12.5,512V552M17.5,484V552M22.5,452V552M27.5,476V552M32.5,499V552M37.5,518V552M42.5,513V552M47.5,513V552M52.5,492V552M57.5,521V552M62.5,534V552M67.5,530V552M72.5,533V552M77.5,539V552M82.5,541V552M87.5,529V552M92.5,526V552M97.5,511V552M102.5,500V552M107.5,505V552M112.5,493V552M117.5,527V552M122.5,523V552M127.5,497V552M132.5,525V552M137.5,467V552M142.5,522V552M147.5,538V552M152.5,537V552M157.5,540V552M162.5,549V552M167.5,539V552M172.5,547V552M177.5,528V552M182.5,517V552M187.5,526V552M192.5,525V552M197.5,503V552M202.5,472V552M207.5,526V552M212.5,546V552M217.5,511V552M222.5,541V552M227.5,534V552M232.5,538V552M237.5,535V552M242.5,539V552M247.5,537V552M252.5,544V552M257.5,545V552M262.5,549V552M267.5,547V552M272.5,536V552M277.5,527V552M282.5,534V552M287.5,524V552M292.5,522V552M297.5,511V552M302.5,536V552M307.5,532V552M312.5,539V552M317.5,535V552M322.5,515V552M327.5,540V552M332.5,542V552M337.5,544V552M342.5,534V552M347.5,548V552M352.5,541V552M357.5,519V552M362.5,507V552M367.5,512V552M372.5,507V552M377.5,507V552M382.5,517V552M387.5,504V552M392.5,515V552M397.5,540V552M402.5,537V552M407.5,542V552M412.5,528V552M417.5,542V552M422.5,535V552M427.5,544V552M432.5,542V552M437.5,536V552M442.5,534V552M447.5,539V552M452.5,519V552M457.5,488V552M462.5,439V552M467.5,481V552M472.5,508V552M477.5,440V552M482.5,504V552M487.5,468V552M492.5,456V552M497.5,468V552M502.5,511V552M507.5,527V552M512.5,540V552M517.5,529V552M522.5,532V552M527.5,518V552M532.5,523V552M537.5,534V552M542.5,514V552M547.5,474V552M552.5,430V552M557.5,466V552M562.5,472V552M567.5,510V552M572.5,506V552M577.5,510V552M582.5,527V552M587.5,526V552M592.5,498V552M597.5,525V552M602.5,517V552M607.5,517V552M612.5,526V552M617.5,528V552M622.5,499V552M627.5,495V552M632.5,512V552M637.5,475V552M642.5,449V552M647.5,502V552M652.5,490V552" stroke="#b02828" stroke-width="1" fill="none" shape-rendering="crispEdges"/>
<path d="M667,331 L662.4,335.8" stroke="#d81818" stroke-width="1" fill="none"/><path d="M656.4,340.6 L660.3,333.8 L664.6,338.1 Z" fill="none" stroke="#d81818" stroke-width="1"/>
<path d="M668,152.5h6M668,158.5h2.6M668,163.5h2.6M668,168.5h2.6M668,173.5h2.6M668,179.5h6M668,184.5h2.6M668,189.5h2.6M668,194.5h2.6M668,199.5h2.6M668,205.5h6M668,210.5h2.6M668,215.5h2.6M668,220.5h2.6M668,226.5h2.6M668,231.5h6M668,236.5h2.6M668,241.5h2.6M668,247.5h2.6M668,252.5h2.6M668,257.5h6M668,262.5h2.6M668,267.5h2.6M668,273.5h2.6M668,278.5h2.6M668,283.5h6M668,288.5h2.6M668,294.5h2.6M668,299.5h2.6M668,304.5h2.6M668,309.5h6M668,315.5h2.6M668,320.5h2.6M668,325.5h2.6M668,330.5h2.6M668,335.5h6M668,341.5h2.6M668,346.5h2.6M668,351.5h2.6M668,356.5h2.6M668,362.5h6M668,367.5h2.6M668,372.5h2.6M668,377.5h2.6M668,383.5h2.6M668,388.5h6M668,393.5h2.6M668,398.5h2.6M668,403.5h2.6M668,409.5h2.6M668,414.5h6M668,422.5h6M668,428.5h2.6M668,435.5h2.6M668,442.5h2.6M668,448.5h2.6M668,455.5h6M668,462.5h2.6M668,468.5h2.6M668,474.5h2.6M668,481.5h2.6M668,487.5h6M668,494.5h2.6M668,500.5h2.6M668,506.5h2.6M668,513.5h2.6M668,520.5h6M668,526.5h2.6M668,533.5h2.6M668,540.5h2.6M668,546.5h2.6M668,552.5h6" stroke="#000080" stroke-width="1.25" fill="none"/>
<text x="677" y="178.8" font-size="11" fill="#000080">8.45</text>
<text x="677" y="204.9" font-size="11" fill="#000080">8.4</text>
<text x="677" y="231.0" font-size="11" fill="#000080">8.35</text>
<text x="677" y="257.2" font-size="11" fill="#000080">8.3</text>
<text x="677" y="283.3" font-size="11" fill="#000080">8.25</text>
<text x="677" y="309.5" font-size="11" fill="#000080">8.2</text>
<text x="677" y="335.6" font-size="11" fill="#000080">8.15</text>
<text x="677" y="361.8" font-size="11" fill="#000080">8.1</text>
<text x="677" y="387.9" font-size="11" fill="#000080">8.05</text>
<text x="677" y="414.1" font-size="11" fill="#000080">8</text>
<text x="677" y="454.5" font-size="11" fill="#000080">1.5e6</text>
<text x="677" y="487.0" font-size="11" fill="#000080">1000000</text>
<text x="677" y="519.5" font-size="11" fill="#000080">500000</text>
<text x="677" y="552.0" font-size="11" fill="#000080">0</text>
<path d="M25.5,564v8M55.5,564v4M85.5,564v4M115.5,564v8M145.5,564v4M175.5,564v4M205.5,564v8M235.5,564v4M265.5,564v4M295.5,564v8M325.5,564v4M355.5,564v4M385.5,564v8M415.5,564v4M445.5,564v4M475.5,564v8M505.5,564v4M535.5,564v4M565.5,564v8M595.5,564v4M625.5,564v4M655.5,564v4" stroke="#0000c0" stroke-width="1.5" fill="none" shape-rendering="crispEdges"/>
<text x="24.5" y="584" font-size="11" fill="#0000c0" text-anchor="middle">09</text>
<text x="114.5" y="584" font-size="11" fill="#0000c0" text-anchor="middle">10</text>
<text x="204.5" y="584" font-size="11" fill="#0000c0" text-anchor="middle">11</text>
<text x="294.5" y="584" font-size="11" fill="#0000c0" text-anchor="middle">12</text>
<text x="384.5" y="584" font-size="11" fill="#0000c0" text-anchor="middle">13</text>
<text x="474.5" y="584" font-size="11" fill="#0000c0" text-anchor="middle">16</text>
<text x="564.5" y="584" font-size="11" fill="#0000c0" text-anchor="middle">17</text>
<text x="4.6" y="597" font-size="11" fill="#0000c0" textLength="41" lengthAdjust="spacingAndGlyphs">09/10/06</text>
<text x="453.8" y="597" font-size="11" fill="#0000c0" textLength="42" lengthAdjust="spacingAndGlyphs">16/10/06</text>
</svg></div>
<div class="sb" style="left:671px;top:567px;width:14px"></div><div class="sb" style="left:671px;top:582px;width:14px"></div><div class="sb" style="left:687px;top:567px;width:14px"></div><div class="sb" style="left:687px;top:582px;width:14px"></div><div class="sb" style="left:704px;top:567px;width:15px"></div><div class="sb" style="left:704px;top:582px;width:15px"></div><svg class="a" style="left:668px;top:564px" width="56" height="34" viewBox="668 564 56 34" font-family="'Liberation Sans',sans-serif" font-size="10.5" fill="#000"><text x="674.6" y="577.8" textLength="5.6" lengthAdjust="spacingAndGlyphs">&lt;</text><text x="690.4" y="577.9" textLength="5.8" lengthAdjust="spacingAndGlyphs">+</text><text x="705.8" y="577.6" textLength="11.4" lengthAdjust="spacingAndGlyphs">R+</text><text x="674.6" y="592.8" textLength="5.6" lengthAdjust="spacingAndGlyphs">&gt;</text><text x="691.9" y="592.6" textLength="3.4" lengthAdjust="spacingAndGlyphs">-</text><text x="705.8" y="592.6" textLength="10.4" lengthAdjust="spacingAndGlyphs">R-</text></svg>
<div id="status"><div class="a" style="left:2px;top:2px;width:716px;height:19px;border-top:1px solid #808080;border-left:1px solid #808080;border-right:1px solid #fff;border-bottom:1px solid #fff"></div></div>
</div>
</body></html>
